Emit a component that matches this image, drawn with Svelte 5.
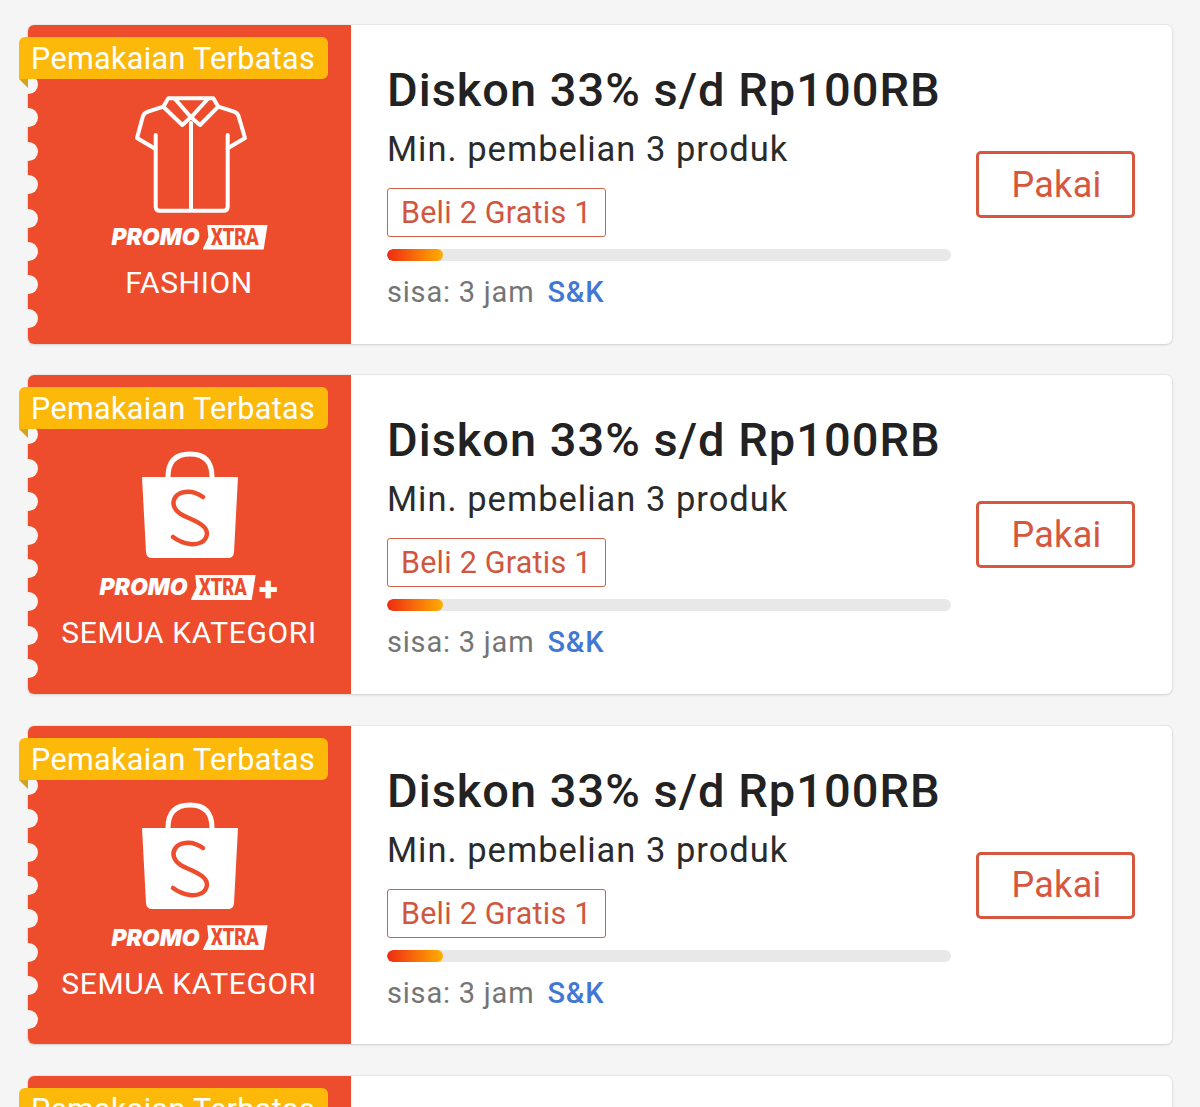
<script lang="ts">
  const vouchers = [
    { icon: 'shirt', plus: false, label: 'FASHION' },
    { icon: 'bag', plus: true, label: 'SEMUA KATEGORI' },
    { icon: 'bag', plus: false, label: 'SEMUA KATEGORI' },
    { icon: 'bag', plus: false, label: 'SEMUA KATEGORI' }
  ]
  const dots = Array.from({ length: 8 })
</script>

<div class="page">
  {#each vouchers as v}
    <div class="voucher">
      <div class="left">
        <div class="dots">
          {#each dots as _}
            <span class="dot"></span>
          {/each}
        </div>
        <div class="ribbon">Pemakaian Terbatas</div>
        <div class="fold"></div>
        <div class="icon-slot">
          {#if v.icon === 'shirt'}
            <svg width="130" height="130" viewBox="0 0 130 130" fill="none" stroke="#fff" stroke-width="4" stroke-linejoin="round" stroke-linecap="round">
              <path d="M38.3 16.7 L23 21.7 Q19 23 18 26 L12 48 L29.3 58.3" />
              <path d="M93.3 16.7 L109 21.7 Q112.5 23 113.5 26 L120 48 L102.7 58.3" />
              <path d="M30.7 45 V116.7 Q30.7 120.7 34.7 120.7 H98.3 Q102.7 120.7 102.7 116.7 V45" />
              <path d="M43.3 8.3 H88.3 L93.3 16.7 L75 35 L66 27.3 L57.3 35 L38.3 16.7 Z" />
              <path d="M50 9 L66 27.3 L82.7 9" />
              <path d="M66 33 V120" />
            </svg>
          {:else}
            <svg width="100" height="110" viewBox="0 0 100 110">
              <path d="M28 27 C28 10 37 4 50 4 C63 4 72 10 72 27" fill="none" stroke="#fff" stroke-width="5" />
              <path d="M2 27 H98 L94 102 Q93.5 108 88 108 H12 Q6.5 108 6 102 Z" fill="#fff" />
              <path d="M63 47 C56 42 50 41 45 42 C36 43 32 50 34 56 C36 63 44 66 51 69 C60 73 67 77 67 84 C66 92 58 95 50 94 C43 93 37 90 33 87" fill="none" stroke="#ee4d2d" stroke-width="4.5" stroke-linecap="round" />
            </svg>
          {/if}
        </div>
        <div class="logo">
          <span class="promo">PROMO</span>
          <span class="xtra"><span>XTRA</span></span>
          {#if v.plus}<span class="plus">+</span>{/if}
        </div>
        <div class="label">{v.label}</div>
      </div>

      <div class="right">
        <div class="info">
          <div class="title">Diskon 33% s/d Rp100RB</div>
          <div class="sub">Min. pembelian 3 produk</div>
          <div class="tag">Beli 2 Gratis 1</div>
          <div class="bar"><div class="fill" style="width: 10%"></div></div>
          <div class="meta">
            <span class="left-time">sisa: 3 jam</span>
            <span class="terms">S&amp;K</span>
          </div>
        </div>
        <button class="use">Pakai</button>
      </div>
    </div>
  {/each}
</div>

<style>
  :global(body) {
    margin: 0;
    background: #f5f5f5;
    overflow: hidden;
  }

  .page {
    height: 1107px;
    overflow: hidden;
    padding: 25px 28px 0;
    box-sizing: border-box;
    display: flex;
    flex-direction: column;
    gap: 31.9px;
    font-family: Roboto, "Liberation Sans", sans-serif;
  }

  .voucher {
    flex: 0 0 318.5px;
    display: flex;
    background: #fff;
    border-radius: 6px;
    box-shadow: 0 1px 3px rgba(0, 0, 0, 0.12), 0 0 0 1px rgba(0, 0, 0, 0.04);
    position: relative;
  }

  .left {
    width: 323px;
    flex-shrink: 0;
    background: #ee4d2d;
    border-radius: 6px 0 0 6px;
    position: relative;
    display: flex;
    flex-direction: column;
    align-items: center;
    padding-top: 65px;
    box-sizing: border-box;
    color: #fff;
  }

  .dots {
    position: absolute;
    left: -9px;
    top: 50px;
    display: flex;
    flex-direction: column;
    gap: 14.4px;
  }

  .dot {
    width: 19px;
    height: 19px;
    border-radius: 50%;
    background: #f5f5f5;
  }

  .ribbon {
    position: absolute;
    left: -9px;
    top: 12px;
    width: 309px;
    height: 42px;
    box-sizing: border-box;
    padding-left: 12px;
    background: #fdb90a;
    border-radius: 6px 6px 6px 0;
    color: #fff;
    font-size: 30.5px;
    letter-spacing: 0.35px;
    line-height: 43px;
  }

  .fold {
    position: absolute;
    left: -9px;
    top: 54px;
    width: 0;
    height: 0;
    border-top: 9px solid #d3a21e;
    border-left: 9px solid transparent;
  }

  .icon-slot {
    height: 130px;
    display: flex;
    align-items: center;
    justify-content: center;
  }

  .logo {
    height: 24px;
    margin-top: 5px;
    display: flex;
    align-items: center;
    color: #fff;
  }

  .promo {
    font-family: Inter, Roboto, sans-serif;
    font-style: italic;
    font-weight: 900;
    font-size: 23px;
    letter-spacing: 0;
  }

  .xtra {
    margin-left: 3px;
    width: 65px;
    height: 25px;
    background: #fff;
    color: #ee4d2d;
    display: flex;
    align-items: center;
    justify-content: center;
    clip-path: polygon(7% 0, 100% 0, 94% 100%, 0 100%, 9% 50%);
  }

  .xtra span {
    font-family: Roboto, sans-serif;
    font-weight: 900;
    font-size: 23px;
    display: inline-block;
    transform: scaleX(0.8);
  }

  .plus {
    font-family: Inter, Roboto, sans-serif;
    font-weight: 900;
    font-size: 33px;
    line-height: 24px;
    margin-left: 1px;
  }

  .label {
    margin-top: 17px;
    margin-right: 1px;
    font-size: 30px;
    letter-spacing: 0.65px;
    line-height: 34px;
    color: #fff;
  }

  .right {
    flex: 1;
    display: flex;
    align-items: flex-start;
    padding-left: 36px;
    padding-right: 37px;
    min-width: 0;
  }

  .info {
    width: 564px;
    padding-top: 36px;
  }

  .title {
    font-size: 47px;
    font-weight: 500;
    letter-spacing: 1px;
    line-height: 58px;
    color: #222;
    white-space: nowrap;
  }

  .sub {
    font-size: 34.5px;
    letter-spacing: 1px;
    line-height: 42px;
    margin-top: 9px;
    color: #2b2b2b;
    white-space: nowrap;
  }

  .tag {
    width: fit-content;
    margin-top: 18px;
    height: 49px;
    box-sizing: border-box;
    padding: 0 13px;
    border: 1.5px solid #d0604a;
    border-radius: 3px;
    color: #d0573f;
    font-size: 30.5px;
    letter-spacing: 0.22px;
    line-height: 48px;
  }

  .bar {
    height: 12px;
    margin-top: 12px;
    border-radius: 6px;
    background: #e8e8e8;
    overflow: hidden;
  }

  .fill {
    height: 100%;
    border-radius: 6px;
    background: linear-gradient(90deg, #ee2a12, #ffae00);
  }

  .meta {
    display: flex;
    gap: 13px;
    margin-top: 13px;
    font-size: 29px;
    letter-spacing: 0.8px;
    line-height: 36px;
  }

  .left-time {
    color: #757575;
  }

  .terms {
    color: #4277d4;
    font-weight: 500;
  }

  .use {
    margin-left: 25px;
    margin-top: 126px;
    width: 159px;
    height: 67px;
    box-sizing: border-box;
    background: #fff;
    border: 3px solid #d6573d;
    border-radius: 5px;
    color: #d6573d;
    font-family: inherit;
    font-size: 36px;
    letter-spacing: 0.3px;
    padding: 0 0 0 2px;
  }
</style>
